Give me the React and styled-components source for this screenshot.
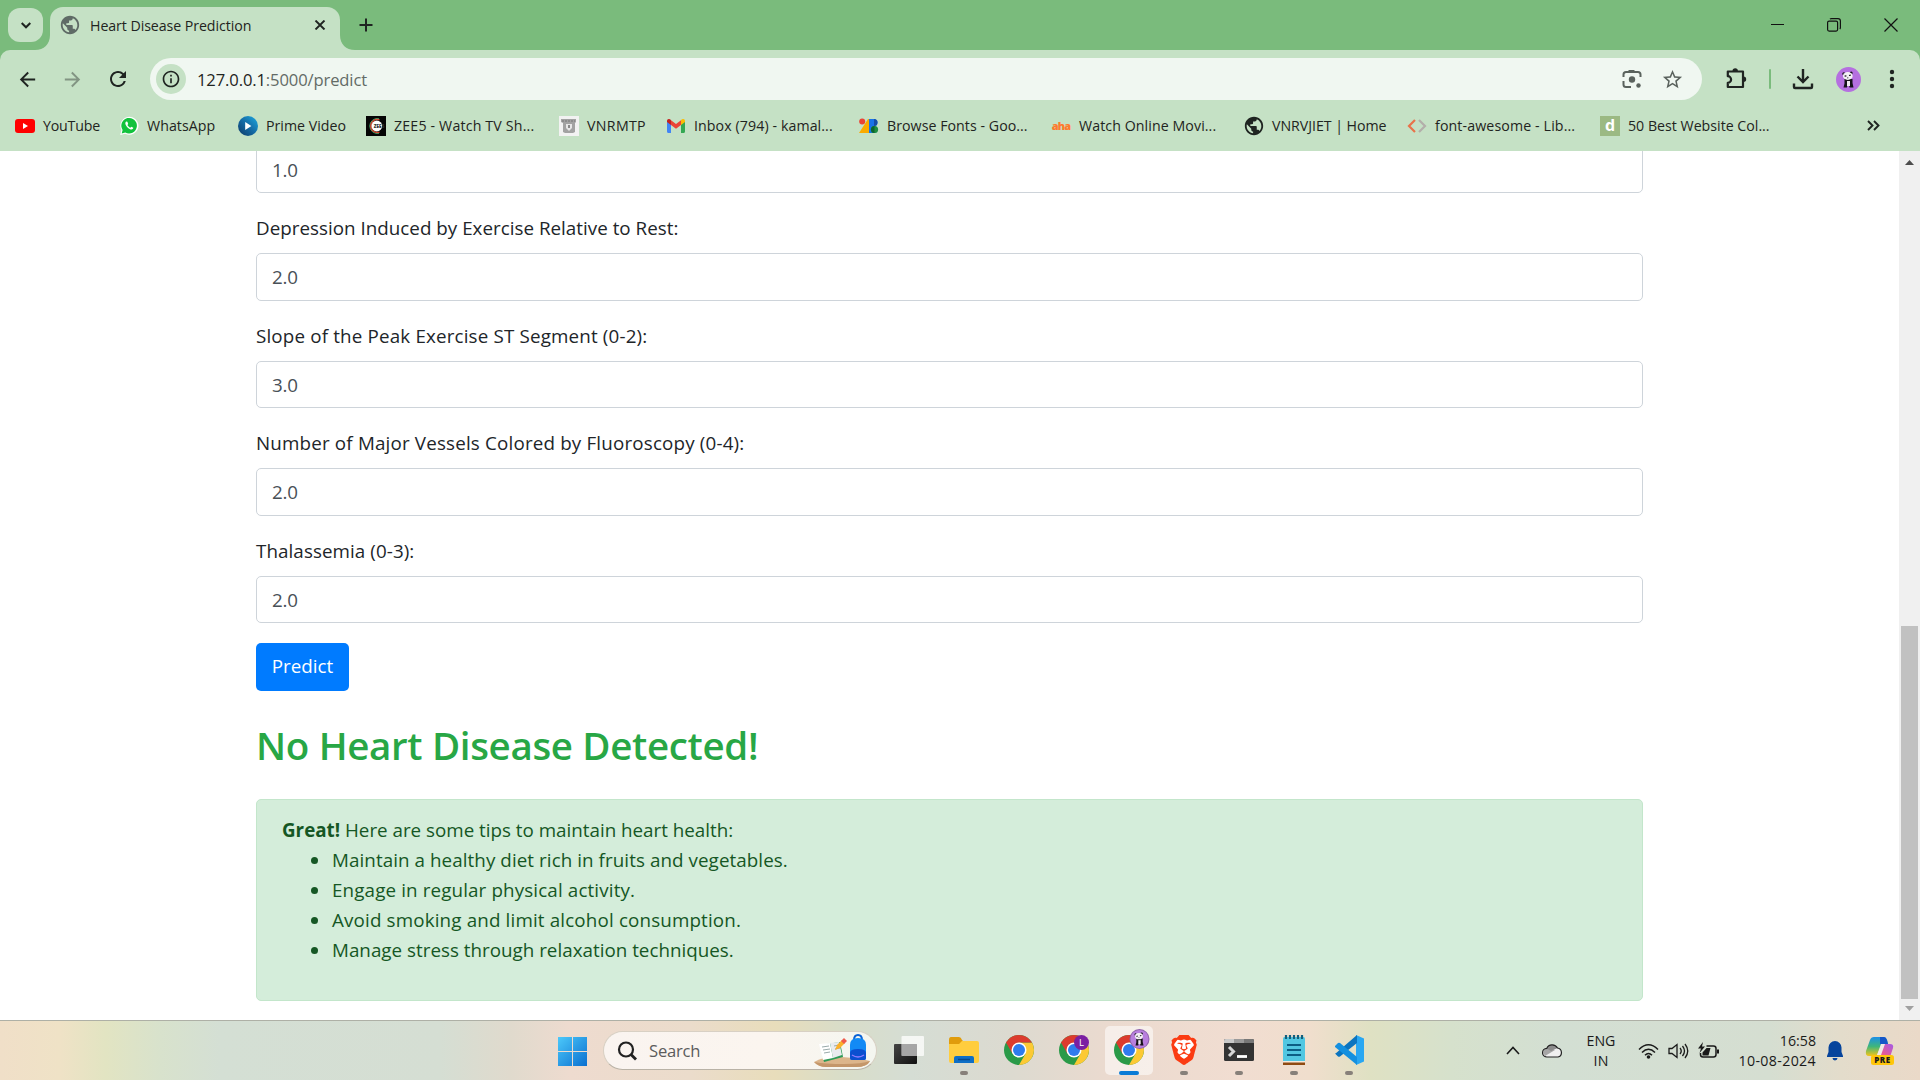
import React from 'react';
import styled, { createGlobalStyle } from 'styled-components';
import { MdPublic, MdArrowBack, MdArrowForward, MdRefresh, MdInfoOutline, MdStarBorder } from 'react-icons/md';
import { SiBrave } from 'react-icons/si';

const Global = createGlobalStyle`
  * { box-sizing: border-box; }
  body { margin: 0; overflow: hidden; font-family: "Open Sans", "Noto Sans", sans-serif; }
  svg { display: block; flex: none; }
`;

const Screen = styled.div`
  width: 1920px; height: 1080px; display: flex; flex-direction: column; overflow: hidden; background: #fff;
`;
const Txt = styled.span`
  white-space: pre; letter-spacing: ${p => p.$ls || 0}px;
`;

/* ---------- tab strip ---------- */
const TabStrip = styled.div`
  height: 50px; flex: none; display: flex; background: #7abb7c; padding-left: 8px; color: #1f2421;
`;
const TabSearch = styled.div`
  width: 35px; height: 34px; margin-top: 8px; border-radius: 12px; background: #c5e1c5;
  display: flex; align-items: center; justify-content: center;
`;
const Flare = styled.svg`
  width: 15px; height: 15px; align-self: flex-end; margin-left: ${p => p.$ml || 0}px;
`;
const Tab = styled.div`
  width: 290px; height: 43px; margin-top: 7px; border-radius: 13px 13px 0 0; background: #c5e1c5;
  display: flex; align-items: center; padding: 0 11px 7px 9px; font-size: 14.2px;
`;
const TabTitle = styled.div`flex: 1; margin: 1px 0 0 9px; line-height: 20px;`;
const NewTab = styled.div`margin: 18px 0 0 4px;`;
const Controls = styled.div`
  margin-left: auto; display: flex; align-items: center; gap: 43px; height: 49px; padding-right: 22px;
`;

/* ---------- toolbar ---------- */
const ToolbarWrap = styled.div`background: #7abb7c; flex: none;`;
const Toolbar = styled.div`
  height: 101px; background: #c5e1c5; border-radius: 10px 10px 0 0; padding-top: 8px; color: #1f2421;
`;
const NavRow = styled.div`display: flex; align-items: center; height: 42px; padding-left: 16px;`;
const NavIcon = styled.div`width: 24px; margin-right: 21px; opacity: ${p => (p.$off ? 0.4 : 1)};`;
const Omnibox = styled.div`
  width: 1552px; height: 42px; margin-left: -1px; border-radius: 21px; background: #f0f7f1; display: flex; align-items: center;
  padding: 0 18px 0 6px; font-size: 16.6px; color: #636b66;
`;
const InfoDot = styled.div`
  width: 30px; height: 30px; border-radius: 50%; background: #c5e1c5; color: #1f2421; margin-right: 11px;
  display: flex; align-items: center; justify-content: center;
`;
const Host = styled.span`color: #1f2421;`;
const OmniActions = styled.div`margin-left: auto; display: flex; align-items: center; gap: 19px; color: #5a625d;`;
const Divider = styled.div`width: 2px; height: 20px; border-radius: 1px; background: #7abb7c;`;
const Right = styled.div`display: flex; align-items: center; margin-left: 23px; gap: 21.5px;`;
const Bookmarks = styled.div`
  height: 51px; display: flex; align-items: center; padding: 0 0 0 15px; font-size: 14.2px;
`;
const Bookmark = styled.div`width: ${p => p.$w}px; display: flex; align-items: center; gap: 8px; flex: none;`;
const BmIcon = styled.div`width: 20px; height: 20px; flex: none; display: flex; align-items: center; justify-content: center;`;
const DTile = styled.div`
  width: 20px; height: 20px; background: #9bb983; color: #fff; font: 700 16px/19px "Open Sans", sans-serif; text-align: center;
`;
const AhaMark = styled.span`color: #ff7a2d; font: 800 11px/12px "Open Sans", sans-serif; letter-spacing: -0.9px;`;

/* ---------- page ---------- */
const PageRow = styled.div`height: 869px; flex: none; display: flex;`;
const Viewport = styled.div`
  width: 1899px; display: flex; flex-direction: column; justify-content: flex-end; align-items: flex-start; overflow: hidden;
  padding: 0 0 19.5px 256px; color: #212529; font-size: 18.8px;
  & > * { flex: none; }
`;
const Field = styled.div`width: 1387px; margin-bottom: 20px;`;
const Label = styled.label`display: block; height: 30px; line-height: 30px; margin-bottom: 10px;`;
const Input = styled.div`
  height: 47.5px; border: 1px solid #ced4da; border-radius: 5px; padding: 0 15px; color: #495057; line-height: 46px; background: #fff;
`;
const Button = styled.button`
  height: 47.5px; width: 93px; border: 0; border-radius: 5px; background: #007bff; color: #fff; padding: 0;
  font: 400 18.8px/47px "Open Sans", sans-serif;
`;
const Heading = styled.h2`
  margin: 30px 0; height: 48px; line-height: 48px; font-size: 38.5px; font-weight: 600; color: #28a745;
`;
const Alert = styled.div`
  width: 1387px; height: 202px; border: 1px solid #c3e6cb; border-radius: 5px; background: #d4edda; color: #155724;
  padding: 15px 25px; line-height: 30px;
`;
const List = styled.ul`margin: 0; padding: 0 0 0 50px; list-style: none;`;
const Item = styled.li`
  height: 30px; display: flex; align-items: center;
  &::before { content: ""; width: 7px; height: 7px; border-radius: 50%; background: #155724; margin: 2px 14px 0 -21px; }
`;
const ScrollBar = styled.div`
  width: 21px; background: #f0f0f0; display: flex; flex-direction: column; align-items: center; padding: 9px 0 9px;
`;
const Thumb = styled.div`width: 17px; height: 373px; margin: auto 0 7px; background: #c1c1c1;`;

/* ---------- taskbar ---------- */
const Taskbar = styled.div`
  height: 60px; flex: none; border-top: 1px solid #aeb0a6; display: flex; color: #1a1a1a;
  background: linear-gradient(90deg, #f0dfc8 0, #efe2c6 60px, #e2e4c2 105px, #d8e2cc 160px, #d4dfd4 220px, #d5ded3 440px, #e0dacd 510px, #eedbcf 570px, #ebdccb 690px, #e8ddbb 775px, #d9ddc8 840px, #d5ddd4 910px, #dcdad0 1010px, #ebdacf 1110px, #f1ddd1 1240px, #f0decd 1310px, #dfe1c3 1370px, #d6e1cc 1450px, #d3dfd3 1560px, #d5ded1 1770px, #e3dccb 1840px, #ead9c8 1920px);
`;
const Apps = styled.div`display: flex; align-items: center; padding-left: 557px;`;
const SearchBox = styled.div`
  width: 274px; height: 39px; margin: 0 8px 0 16px; border-radius: 20px; border: 1px solid #d8d0c4; border-bottom-color: #b9b2a6;
  background: linear-gradient(90deg, #faf4f0, #fbf5ef 60%, #f4f6f0); display: flex; align-items: center; padding: 0 5px 0 13px;
  font-size: 16.6px; color: #5c5c5c;
`;
const SearchWord = styled.span`margin-left: 12px; flex: 1; line-height: 24px;`;
const TaskApp = styled.div`
  width: 48px; height: 49px; margin-right: 7px; border-radius: 5px; display: flex; flex-direction: column; align-items: center;
  padding-top: 3px; background: ${p => (p.$active ? 'rgba(255,255,255,.55)' : 'transparent')};
`;
const Mark = styled.div`
  height: 4px; border-radius: 2px; margin-top: auto;
  width: ${p => (p.$active ? 20 : 8)}px; background: ${p => (p.$active ? '#0a7bd6' : p.$none ? 'transparent' : '#87807a')};
`;
const Tray = styled.div`margin-left: auto; display: flex; align-items: center; padding-right: 24px; font-size: 14.2px;`;
const TrayIcons = styled.div`display: flex; align-items: center; gap: ${p => p.$gap}px;`;
const Lang = styled.div`width: 30px; margin: 0 22px 0 23px; line-height: 20px; display: flex; flex-direction: column; align-items: center;`;
const Clock = styled.div`width: 78px; margin: 0 10px 0 19px; line-height: 20px; display: flex; flex-direction: column; align-items: flex-end;`;

const PandaFigure = () => (
  <>
    <path d="M8.500 12h8v4l1 4.500h-4l-.5-2.500h-1.500L11 20.500H7.500l1-4z" fill="#16121a" />
    <circle cx="7.800" cy="6.800" r="1.500" fill="#16121a" /><circle cx="15.200" cy="5.900" r="1.500" fill="#16121a" />
    <ellipse cx="11.800" cy="9" rx="4.900" ry="3.900" fill="#f4f1f5" />
    <path d="m8.600 9.200 1.800-.3m2.600-.4 1.800-.3" stroke="#16121a" strokeWidth="1.200" /><circle cx="11.800" cy="10.800" r=".6" fill="#16121a" />
    <path d="M11 14h3v5h-3z" fill="#efe9f1" />
  </>
);
const Panda = () => (
  <svg width="25" height="25" viewBox="0 0 25 25">
    <circle cx="12.500" cy="12.500" r="12.500" fill="#b56fe0" />
    <PandaFigure />
  </svg>
);
const Chrome = ({ children }) => (
  <svg width="46" height="38" viewBox="-8 -6 46 38">
    <circle cx="15" cy="15" r="15" fill="#2a9a48" />
    <path d="M27.990 7.500A15 15 0 0 1 15 30L21.500 18.750 15 7.500z" fill="#fcc934" />
    <path d="M2.010 7.500A15 15 0 0 1 27.990 7.500H15L8.500 18.750z" fill="#dc3b2e" />
    <circle cx="15" cy="15" r="7.500" fill="#fff" /><circle cx="15" cy="15" r="6" fill="#2f7bee" />
    {children}
  </svg>
);

const icons = {
  youtube: <svg width="20" height="14" viewBox="0 0 20 14"><rect width="20" height="14" rx="3" fill="#f00" /><path d="M8 4v6l5-3z" fill="#fff" /></svg>,
  whatsapp: (
    <svg width="20" height="20" viewBox="0 0 20 20"><path d="M1.200 19 2.500 14A9 9 0 1 1 6.200 17.700z" fill="#fff" />
      <path d="M2.700 17.500 3.600 14A7.800 7.800 0 1 1 6.300 16.500z" fill="#12c23d" />
      <path d="M7.300 5.500c-1 .6-1.300 2-.5 3.600 1 2 2.800 3.700 4.800 4.300 1.200.4 2.600-.2 2.700-1.600l-2-1.100-1 1c-1.400-.6-2.300-1.500-2.900-2.700l.8-1-.8-2.300z" fill="#fff" /></svg>
  ),
  prime: <svg width="20" height="20" viewBox="0 0 20 20"><defs><linearGradient id="pv" x1="1" y1="0" x2="0" y2="1"><stop stopColor="#1cabe2" /><stop offset=".5" stopColor="#156ba5" /><stop offset="1" stopColor="#0d3764" /></linearGradient></defs><circle cx="10" cy="10" r="10" fill="url(#pv)" /><path d="M7.200 6v8l6.200-4z" fill="#fff" /></svg>,
  zee: (
    <svg width="20" height="20" viewBox="0 0 20 20"><rect width="20" height="20" fill="#050505" />
      <path d="M13 2.700A7.500 7.500 0 1 0 13 17.300" fill="none" stroke="#3fa66a" strokeWidth="1" /><path d="M13.500 3.900A6.500 6.500 0 1 0 13.500 16.100" fill="none" stroke="#d8452f" strokeWidth="1.300" />
      <circle cx="10.800" cy="10" r="5.400" fill="#fff" /><text x="7.800" y="11.800" fontSize="4.600" fontWeight="800" fontFamily="Open Sans" fill="#333">ZEE5</text></svg>
  ),
  vnr: <svg width="20" height="20" viewBox="0 0 20 20"><rect width="20" height="20" fill="#f2f2f2" /><path d="M2 3h15v3l-1 1v9l-2 1H6l-2-1V7L2 6z" fill="#a2a2a2" /><path d="M7 8h6v4l-3 3-3-3z" fill="#e6e6e6" /><path d="M3 5h13" stroke="#777" strokeDasharray="2 1" /><path d="M9 9h2v3H9z" fill="#888" /></svg>,
  gmail: <svg width="18" height="14" viewBox="0 0 18 14"><path d="M0 2v10.500C0 13.400.6 14 1.400 14H4V5z" fill="#4285f4" /><path d="M18 2v10.500c0 .9-.6 1.500-1.400 1.500H14V5z" fill="#34a853" /><path d="M14 1.200V6l4-3V2c0-2-2.200-2.600-3.400-1.400z" fill="#fbbc04" /><path d="M4 1.200V6L0 3V2C0 0 2.200-.6 3.400.6z" fill="#c5221f" /><path d="M4 1.200 9 5l5-3.800V6L9 9.800 4 6z" fill="#ea4335" /></svg>,
  fonts: <svg width="20" height="16" viewBox="0 0 20 16"><path d="M9 1h3v14H0z" fill="#f9ab00" /><circle cx="3.200" cy="3.600" r="3" fill="#ea4335" /><path d="M10 1h5a3.500 3.500 0 0 1 0 7 3.500 3.500 0 0 1 0 7h-5z" fill="#1a73e8" /><circle cx="15.500" cy="11.500" r="3.600" fill="#1e8e3e" /><path d="M12 11.500A3.600 3.600 0 0 1 15.500 8v7.100a3.600 3.600 0 0 1-3.500-3.600z" fill="#0d652d" /><path d="M15 1a3.500 3.500 0 0 1 0 7z" fill="#174ea6" /></svg>,
  aha: <AhaMark>aha</AhaMark>,
  globe: <MdPublic size={22} />,
  code: <svg width="20" height="14" viewBox="0 0 20 14" fill="none" strokeWidth="2.200"><path d="M8 1 2 7l6 6" stroke="#e8734a" /><path d="m12 1 6 6-6 6" stroke="#b3aeaa" /></svg>,
  d: <DTile>d</DTile>,
};

const bookmarks = [
  ['youtube', 'YouTube', 104, -0.19],
  ['whatsapp', 'WhatsApp', 119, 0.06],
  ['prime', 'Prime Video', 128, 0],
  ['zee', 'ZEE5 - Watch TV Sh...', 193, 0.17],
  ['vnr', 'VNRMTP', 107, 0.33],
  ['gmail', 'Inbox (794) - kamal...', 193, 0.09],
  ['fonts', 'Browse Fonts - Goo...', 192, 0.04],
  ['aha', 'Watch Online Movi...', 193, 0.08],
  ['globe', 'VNRVJIET | Home', 163, -0.04],
  ['code', 'font-awesome - Lib...', 193, 0.12],
  ['d', '50 Best Website Col...', 267, 0],
];
const fields = [
  ['Depression Induced by Exercise Relative to Rest:', '2.0', 0.02],
  ['Slope of the Peak Exercise ST Segment (0-2):', '3.0', 0.165],
  ['Number of Major Vessels Colored by Fluoroscopy (0-4):', '2.0', 0.175],
  ['Thalassemia (0-3):', '2.0', 0.08],
];
const tips = [
  ['Maintain a healthy diet rich in fruits and vegetables.', 0.075],
  ['Engage in regular physical activity.', 0.135],
  ['Avoid smoking and limit alcohol consumption.', 0.155],
  ['Manage stress through relaxation techniques.', 0.015],
];

export default function App() {
  return (
    <Screen>
      <Global />
      <TabStrip>
        <TabSearch><svg width="10" height="7" viewBox="0 0 10 7" fill="none" stroke="currentColor" strokeWidth="2"><path d="m.7 1 4.300 4.300L9.300 1" /></svg></TabSearch>
        <Flare $ml={-8} viewBox="0 0 15 15"><path d="M15 0v15H0C9 15 15 9 15 0z" fill="#c5e1c5" /></Flare>
        <Tab>
          <MdPublic size={22} color="#5f6b66" />
          <TabTitle><Txt $ls={-0.07}>Heart Disease Prediction</Txt></TabTitle>
          <svg width="18" height="10" viewBox="0 0 18 10" fill="none" stroke="currentColor" strokeWidth="1.900"><path d="m4.500.500 9 9m0-9-9 9" /></svg>
        </Tab>
        <Flare viewBox="0 0 15 15"><path d="M0 0v15h15C6 15 0 9 0 0z" fill="#c5e1c5" /></Flare>
        <NewTab><svg width="14" height="14" viewBox="0 0 14 14" fill="none" stroke="currentColor" strokeWidth="2"><path d="M7 .500v13M.500 7h13" /></svg></NewTab>
        <Controls>
          <svg width="13" height="13" viewBox="0 0 13 13" stroke="#111"><path d="M0 6.500h13" /></svg>
          <svg width="14" height="14" viewBox="0 0 14 14" fill="none" stroke="#111" strokeWidth="1.200"><rect x=".6" y="3.100" width="10" height="10" rx="1.500" /><path d="M3 1.200Q3.500.600 4.500.600H11Q13.400.600 13.400 3v6.500q0 1-.6 1.500" /></svg>
          <svg width="14" height="14" viewBox="0 0 14 14" fill="none" stroke="#111" strokeWidth="1.200"><path d="m.5.500 13 13m0-13-13 13" /></svg>
        </Controls>
      </TabStrip>
      <ToolbarWrap>
        <Toolbar>
          <NavRow>
            <NavIcon><MdArrowBack size={23} /></NavIcon>
            <NavIcon $off><MdArrowForward size={23} /></NavIcon>
            <NavIcon><MdRefresh size={24} /></NavIcon>
            <Omnibox>
              <InfoDot><MdInfoOutline size={20} /></InfoDot>
              <Txt $ls={-0.13}><Host>127.0.0.1</Host>:5000/predict</Txt>
              <OmniActions>
                <svg width="20" height="20" viewBox="0 0 20 20" fill="none" stroke="currentColor" strokeWidth="2"><path d="M1.500 8V5.500Q1.500 3 4 3h12q2.500 0 2.500 2.500V8M1.500 12v3.500Q1.500 18 4 18h5M6.500 2h6" /><circle cx="10" cy="10.500" r="3.200" fill="currentColor" stroke="none" /><circle cx="16.500" cy="16.500" r="2.200" fill="currentColor" stroke="none" /></svg>
                <MdStarBorder size={23} />
              </OmniActions>
            </Omnibox>
            <Right>
              <svg width="22" height="22" viewBox="0 0 22 22"><path d="M2.800 3.500H18v15.500H2.800v-4.200a3.200 3.200 0 0 0 0-6.600z" fill="none" stroke="currentColor" strokeWidth="2.200" strokeLinejoin="round" /><path d="M7.500 3a2.700 2.700 0 0 1 5.400 0zM18.500 8.600a2.700 2.700 0 0 1 0 5.400z" fill="currentColor" /></svg>
              <Divider />
              <svg width="22" height="22" viewBox="0 0 22 22" fill="none" stroke="currentColor" strokeWidth="2.400"><path d="M11 1v12M5.500 8.500 11 14l5.500-5.500M2 15.500V19q0 1 1 1h16q1 0 1-1v-3.500" /></svg>
              <Panda />
              <svg width="20" height="20" viewBox="0 0 20 20" fill="currentColor"><circle cx="10" cy="3" r="2.200" /><circle cx="10" cy="10" r="2.200" /><circle cx="10" cy="17" r="2.200" /></svg>
            </Right>
          </NavRow>
          <Bookmarks>
            {bookmarks.map(([k, t, w, ls]) => (
              <Bookmark key={t} $w={w}><BmIcon>{icons[k]}</BmIcon><Txt $ls={ls}>{t}</Txt></Bookmark>
            ))}
            <svg width="13" height="11" viewBox="0 0 13 11" fill="none" stroke="currentColor" strokeWidth="1.900"><path d="m1 1 4.500 4.500L1 10M7 1l4.500 4.500L7 10" /></svg>
          </Bookmarks>
        </Toolbar>
      </ToolbarWrap>

      <PageRow>
        <Viewport>
          <Field><Input><Txt $ls={-0.2}>1.0</Txt></Input></Field>
          {fields.map(([l, v, ls]) => (
            <Field key={l}><Label><Txt $ls={ls}>{l}</Txt></Label><Input><Txt $ls={-0.2}>{v}</Txt></Input></Field>
          ))}
          <Button><Txt $ls={0}>Predict</Txt></Button>
          <Heading><Txt $ls={-0.34}>No Heart Disease Detected!</Txt></Heading>
          <Alert>
            <Txt><b>Great!</b></Txt><Txt> Here are some tips to maintain heart health:</Txt>
            <List>{tips.map(([t, ls]) => <Item key={t}><Txt $ls={ls}>{t}</Txt></Item>)}</List>
          </Alert>
        </Viewport>
        <ScrollBar>
          <svg width="9" height="5" viewBox="0 0 9 5"><path d="M4.500 0 9 5H0z" fill="#4d4d4d" /></svg>
          <Thumb />
          <svg width="9" height="5" viewBox="0 0 9 5"><path d="M4.500 5 9 0H0z" fill="#a0a0a0" /></svg>
        </ScrollBar>
      </PageRow>

      <Taskbar>
        <Apps>
          <svg width="30" height="30" viewBox="0 0 30 30"><defs><linearGradient id="win" x1="0" y1="0" x2="1" y2="1"><stop stopColor="#4cc9fa" /><stop offset="1" stopColor="#0a6fd0" /></linearGradient></defs><path d="M1 1h14v14H1zM16 1h14v14H16zM1 16h14v14H1zM16 16h14v14H16z" fill="url(#win)" /></svg>
          <SearchBox>
            <svg width="20" height="20" viewBox="0 0 20 20" fill="none" stroke="#222" strokeWidth="2.200"><circle cx="9" cy="8.500" r="7" /><path d="m14 13.500 5 5" strokeWidth="2.800" /></svg>
            <SearchWord><Txt $ls={-0.2}>Search</Txt></SearchWord>
            <svg width="58" height="34" viewBox="0 0 58 34">
              <path d="M1 28q10-6 28-5t28 4q-3 6-14 6H13Q5 33 1 28z" fill="#dcb58b" /><path d="M1 28q5 5 12 5h30q11 0 14-6-8 3-26 3T1 28z" fill="#c4966a" />
              <path d="m7 11 20-3 3 15-19 5z" fill="#2e9a57" /><path d="m6 10 11-1 3 15-10 2z" fill="#fff" /><path d="m17 9 9-1 3 13-9 3z" fill="#e9ebee" /><path d="m9 13 7-1m-6 4 7-1m-6 4 6-1m4-6 5-1m-4 4 5-1" stroke="#9aa" />
              <path d="m22 16 2-5 5-5 3 3-5 5z" fill="#fbb02a" /><path d="m28 7 3-3 3 3-3 3z" fill="#ef5a4c" />
              <path d="M41 6q0-5 4-5t4 5" fill="none" stroke="#0b62d6" strokeWidth="2" /><path d="M37 11q0-7 8-7t8 7v13q0 2-2 2H39q-2 0-2-2z" fill="#128af5" /><path d="M37 19q0-4 8-4t8 4v5q0 2-2 2H39q-2 0-2-2z" fill="#0a4fd0" /><path d="M39 21q6 4 12 0" fill="none" stroke="#8e7bff" strokeWidth="1.500" />
            </svg>
          </SearchBox>
          <TaskApp>
            <svg width="46" height="38" viewBox="-8 -6 46 38"><defs><linearGradient id="tv" x1="0" y1="0" x2="1" y2="1"><stop stopColor="#444" /><stop offset="1" stopColor="#111" /></linearGradient></defs><rect x="0" y="9" width="23" height="20" rx="1" fill="url(#tv)" /><rect x="7.500" y="1" width="22.500" height="20" rx="1" fill="#fff" opacity=".75" /><path d="M7.500 9H23v12H7.500z" fill="#888" opacity=".55" /></svg>
            <Mark $none />
          </TaskApp>
          <TaskApp>
            <svg width="46" height="38" viewBox="-8 -6 46 38"><path d="M0 5q0-3 2-3h8q2 0 3 3l2 2v6H0z" fill="#e09c0c" /><path d="M0 9h10l3-3h15q2 0 2 2v18q0 2-2 2H2q-2 0-2-2z" fill="#ffcd3e" /><path d="M5 28v-5q0-2 2-2h16q2 0 2 2v5z" fill="#0f6fc6" /><path d="M9 24.500h12" stroke="#094a8c" strokeWidth="1.500" /></svg>
            <Mark />
          </TaskApp>
          <TaskApp><Chrome /><Mark $none /></TaskApp>
          <TaskApp><Chrome><circle cx="22.500" cy="7.500" r="7.500" fill="#7a1fa2" /><text x="22.500" y="11" textAnchor="middle" fontSize="9.500" fontFamily="Open Sans" fill="#fff">L</text></Chrome><Mark $none /></TaskApp>
          <TaskApp $active>
            <Chrome><g transform="translate(15.500 -6) scale(.8)"><circle cx="12.500" cy="12.500" r="12.500" fill="#8f62ad" /><circle cx="12.500" cy="12.500" r="11.300" fill="#b87fdd" /><PandaFigure /></g></Chrome>
            <Mark $active />
          </TaskApp>
          <TaskApp>
            <svg width="46" height="38" viewBox="-8 -6 46 38"><path d="M6 5h18l2 8-6 12-5 4-5-4-6-12z" fill="#fff" /><SiBrave x="0" y="0" size={30} color="#fb3b12" /></svg>
            <Mark />
          </TaskApp>
          <TaskApp>
            <svg width="46" height="38" viewBox="-8 -6 46 38"><rect x="0" y="4" width="30" height="22" rx="1.500" fill="#333" /><path d="M0 8V5.500Q0 4 1.500 4H10v4z" fill="#c9c9c9" /><path d="M10 4h10v4H10z" fill="#9a9a9a" /><path d="M20 4h8.500Q30 4 30 5.500V8H20z" fill="#777" /><path d="m5 12 4.500 4.500L5 21" fill="none" stroke="#d5d5d5" strokeWidth="3" /><path d="M13 21.500h10" stroke="#fff" strokeWidth="2.800" /></svg>
            <Mark />
          </TaskApp>
          <TaskApp>
            <svg width="46" height="38" viewBox="-8 -6 46 38"><rect x="4" y="2" width="22" height="26" rx="1.500" fill="#52c7e2" /><path d="M4 26h22v4H4z" fill="#8f4a12" /><path d="M4 26h22v1.500H4z" fill="#f4e9dc" /><path d="M7 0v4M11 0v4M15 0v4M19 0v4M23 0v4" stroke="#135e7c" strokeWidth="2.200" /><path d="M8 10h14M8 15h14M8 20h14" stroke="#0c5e85" strokeWidth="2" /></svg>
            <Mark />
          </TaskApp>
          <TaskApp>
            <svg width="46" height="38" viewBox="-8 -6 46 38"><path d="M22 0 30 3.500v23L22 30z" fill="#29a7f2" /><path d="m1 18.500 3 3q1 .5 2 0L23 8V0L1 19z" fill="#0b74bf" /><path d="m1 11 3-3q1-.5 2 0L23 22v8L1 12z" fill="#1490df" /></svg>
            <Mark />
          </TaskApp>
        </Apps>
        <Tray>
          <TrayIcons $gap={22}>
            <svg width="14" height="9" viewBox="0 0 14 9" fill="none" stroke="currentColor" strokeWidth="1.600"><path d="m1 8 6-6.500L13 8" /></svg>
            <svg width="21" height="15" viewBox="0 0 21 15"><path d="M5 14a4.300 4.300 0 0 1-.3-8.600A6 6 0 0 1 15.500 5a4.600 4.600 0 0 1 .5 9z" fill="#f0f0f0" /><path d="M1.300 9.700A4.300 4.300 0 0 1 4.700 5.400Q10 5.500 13 7L3 13z" fill="#a6a6a6" /><path d="M4.700 5.400A6 6 0 0 1 15.500 5L9 8z" fill="#8c8c8c" /><path d="M5 14a4.300 4.300 0 0 1-.3-8.600A6 6 0 0 1 15.500 5a4.600 4.600 0 0 1 .5 9z" fill="none" stroke="#222" strokeWidth="1.200" /></svg>
          </TrayIcons>
          <Lang><Txt>ENG</Txt><Txt $ls={0.1}>IN</Txt></Lang>
          <TrayIcons $gap={9}>
            <svg width="21" height="16" viewBox="0 0 21 16" fill="none" stroke="currentColor" strokeWidth="1.500"><path d="M1 6.500Q10.500-3 20 6.500M4 9.500q6.500-6.500 13 0M7 12.300q3.500-3.500 7 0" /><circle cx="10.500" cy="14" r="1.800" fill="currentColor" stroke="none" /></svg>
            <svg width="21" height="18" viewBox="0 0 21 18" fill="none" stroke="currentColor" strokeWidth="1.300"><path d="M1 6.500h3L9 2.500v13l-5-4H1zM12 6q2.500 3 0 6M14.500 4q4 5 0 10M17 2q5.500 7 0 14" /></svg>
            <svg width="21" height="17" viewBox="0 0 21 17"><path d="M8.500 4h7q2.500 0 2.500 2.500v6q0 2.500-2.500 2.500H5q-2.500 0-2.500-2.500V11" fill="none" stroke="#1a1a1a" strokeWidth="1.500" /><path d="M4.500 13.500v-3l4-4.500h4l-2 7.500zM19 7.500h2v4h-2z" fill="#1a1a1a" /><path d="M5 0 0 6.500h3L1.500 11 7 4.500H4z" fill="#1a1a1a" /></svg>
          </TrayIcons>
          <Clock><Txt>16:58</Txt><Txt $ls={0.34}>10-08-2024</Txt></Clock>
          <TrayIcons $gap={20}>
            <svg width="18" height="20" viewBox="0 0 18 20" fill="#06449c"><path d="M9 0a6.500 6.500 0 0 0-6.500 6.500V11L1 15v1h16v-1l-1.500-4V6.500A6.500 6.500 0 0 0 9 0zM6.500 17a2.500 2.500 0 0 0 5 0z" /></svg>
            <svg width="32" height="30" viewBox="0 0 32 30"><defs><linearGradient id="c1" x1="0" y1="0" x2="0" y2="1"><stop stopColor="#1b8fe8" /><stop offset=".5" stopColor="#3fb67a" /><stop offset="1" stopColor="#f5c518" /></linearGradient><linearGradient id="c2" x1="1" y1="0" x2="0" y2="1"><stop stopColor="#a45be8" /><stop offset=".6" stopColor="#ee5a8c" /><stop offset="1" stopColor="#fb8b3c" /></linearGradient></defs>
              <path d="M10 1h10q2 0 3 3l1 4h-6l-4 9q-1 3-4 3H5q-4 0-3-5L6 4q1-3 4-3z" fill="url(#c1)" /><path d="M16 1h4q2 0 3 3l1 4h-8z" fill="#1557c8" /><path d="M19 8h7q4 0 3 4l-3 9q-1 3-5 3H9l4-3z" fill="url(#c2)" /><path d="M17 8h4l-4 11h-4z" fill="#f1e9e6" /><rect x="7" y="19" width="23" height="10" rx="2.500" fill="#ffc60a" /><text x="18.500" y="27" textAnchor="middle" fontSize="8" fontWeight="800" letterSpacing=".5" fontFamily="Open Sans" fill="#1a1a1a">PRE</text></svg>
          </TrayIcons>
        </Tray>
      </Taskbar>
    </Screen>
  );
}
